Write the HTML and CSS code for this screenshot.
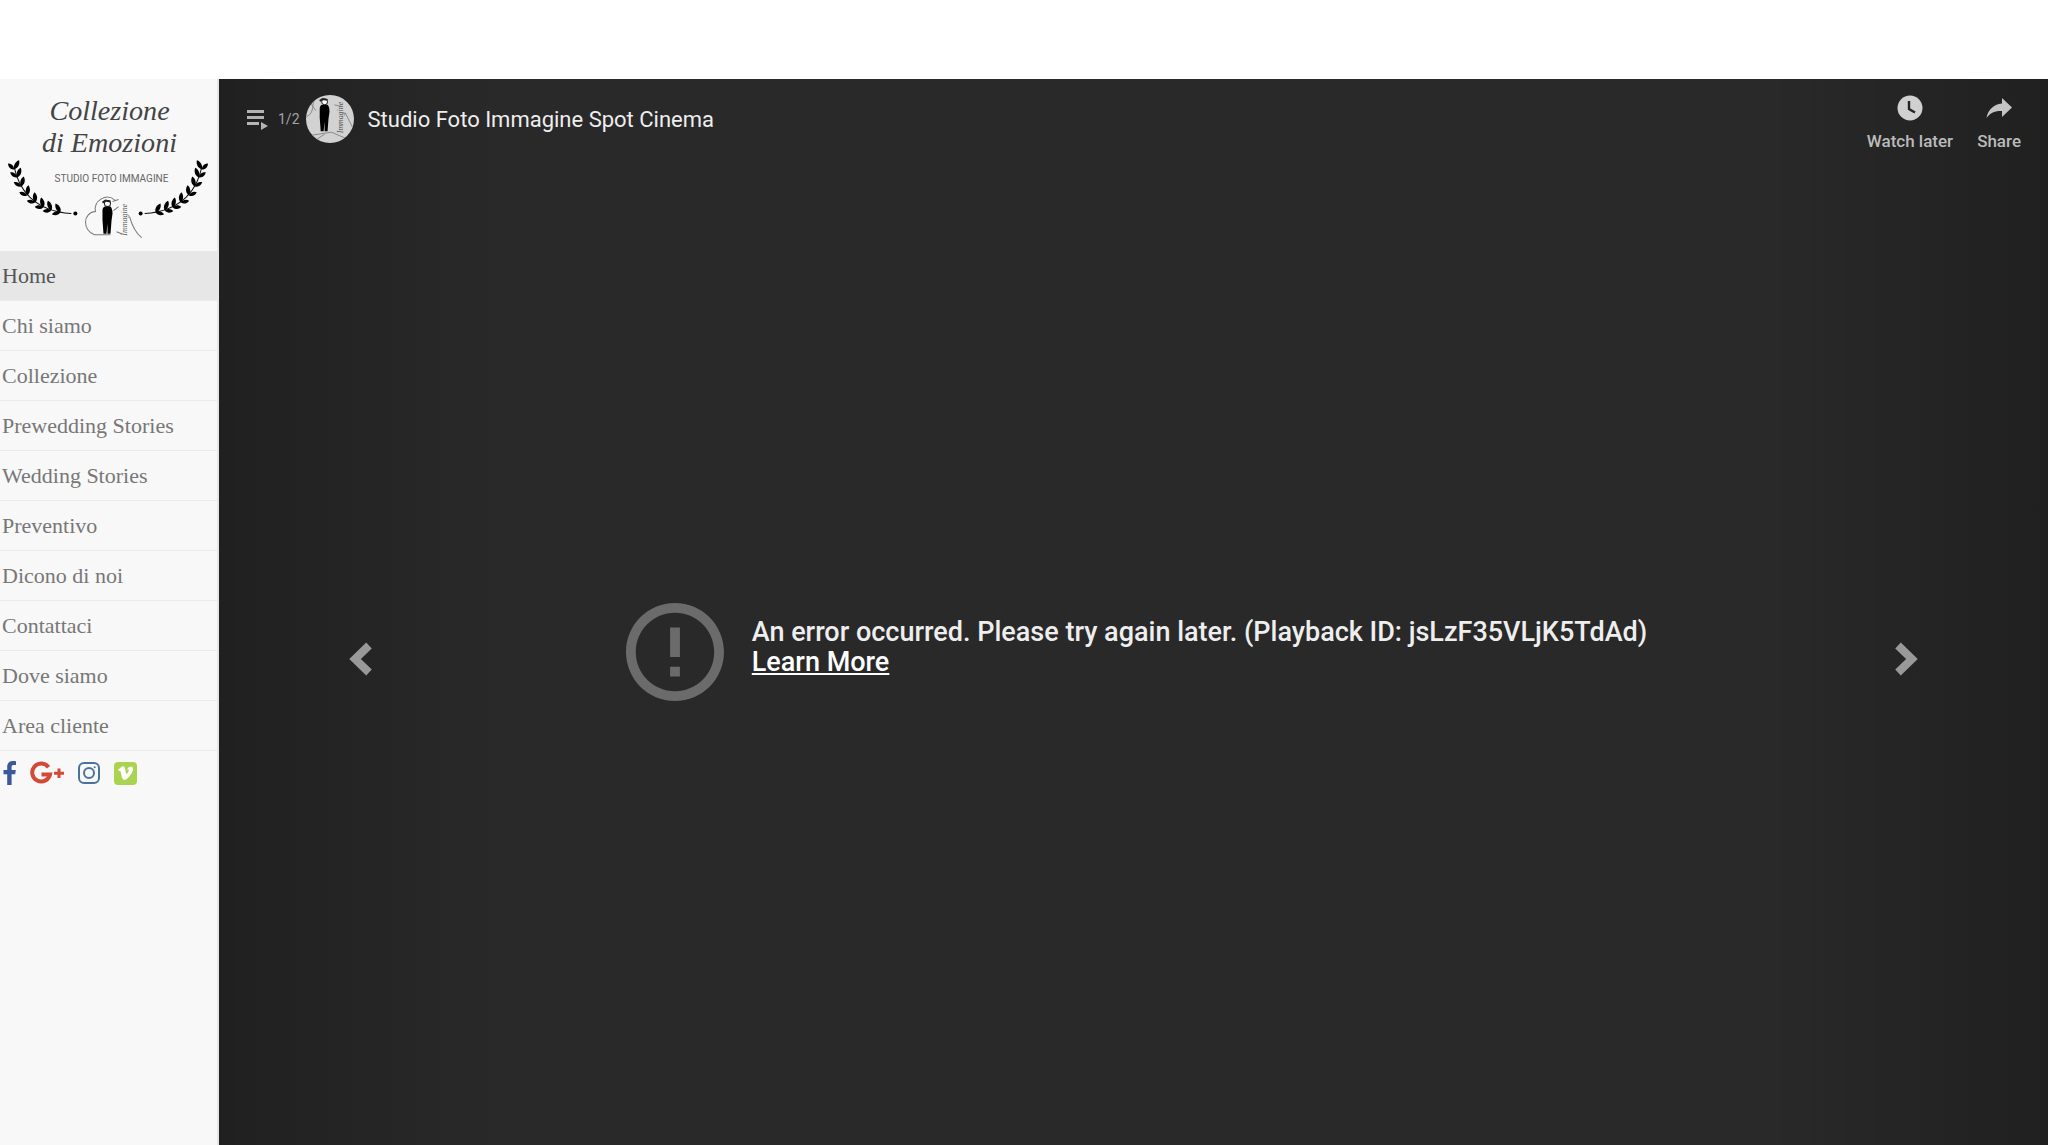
FILE: index.html
```html
<!DOCTYPE html>
<html lang="it">
<head>
    <meta charset="UTF-8">
    <meta name="viewport" content="width=device-width, initial-scale=1.0">
    <title>Studio Foto Immagine</title>
    <link rel="stylesheet" href="styles.css">
</head>
<body>
    <div class="page">
        <aside class="sidebar">
            <a class="brand" href="#">
                <svg class="logo" viewBox="0 0 216 171" role="img" aria-label="Collezione di Emozioni">
                    <defs>
                        <g id="leaf">
                            <path d="M0 0C-4 0-6-3-6-6C-3-6 0-4 0 0z"/>
                            <path d="M0 0C-1-3 1-8 5-9C6-5 4-1 0 0z"/>
                        </g>
                        <g id="branch">
                            <path d="M14 87C18 108 32 131 71 134" fill="none" stroke="#111" stroke-width="1"/>
                            <use href="#leaf" transform="translate(14 90)"/>
                            <use href="#leaf" transform="translate(17 98) rotate(-8)"/>
                            <use href="#leaf" transform="translate(21 107) rotate(-14)"/>
                            <use href="#leaf" transform="translate(27 116) rotate(-22)"/>
                            <use href="#leaf" transform="translate(35 123) rotate(-32)"/>
                            <use href="#leaf" transform="translate(43 128) rotate(-40)"/>
                            <use href="#leaf" transform="translate(51 131) rotate(-48)"/>
                            <use href="#leaf" transform="translate(60 133) rotate(-56)"/>
                            <circle cx="75" cy="134" r="2"/>
                        </g>
                        <g id="couple">
                            <circle cx="107" cy="124" r="3" fill="#f8f8f8" stroke="#222" stroke-width="1"/>
                            <path d="M105 127h5c1 1 2 3 2 7l-1 7l-1 13h-3v-10l-1 10h-3l-1-14v-9c0-2 1-4 3-4z"/>
                            <path d="M102 123l3-2l5 1" fill="none" stroke="#222" stroke-width="2"/>
                        </g>
                    </defs>
                    <text class="logo-script" x="109" y="41">Collezione</text>
                    <text class="logo-script" x="109" y="73">di Emozioni</text>
                    <text class="logo-caps" x="111" y="103">STUDIO FOTO IMMAGINE</text>
                    <use href="#branch"/>
                    <use href="#branch" transform="translate(215 0) scale(-1 1)"/>
                    <path d="M110 155H94C82 151 82 133 95 132C93 121 106 113 115 121" fill="none" stroke="#777" stroke-width="1"/>
                    <path d="M112 122l6-2M113 131l5-4M116 152l5 2M129 137c3 11 7 17 12 21" fill="none" stroke="#777" stroke-width="1"/>
                    <use href="#couple"/>
                    <text class="logo-name" transform="translate(126 156) rotate(-90)">Immagine</text>
                </svg>
            </a>
            <nav class="menu">
                <a class="active" href="#">Home</a>
                <a href="#">Chi siamo</a>
                <a href="#">Collezione</a>
                <a href="#">Prewedding Stories</a>
                <a href="#">Wedding Stories</a>
                <a href="#">Preventivo</a>
                <a href="#">Dicono di noi</a>
                <a href="#">Contattaci</a>
                <a href="#">Dove siamo</a>
                <a href="#">Area cliente</a>
            </nav>
            <div class="social">
                <a href="#" aria-label="Facebook">
                    <svg width="14" height="24" viewBox="0 0 14 24"><path fill="#3b5998" d="M13 .3v3.800h-2.300C9 4.100 8.600 5 8.600 6.200V9h4.200l-.6 4.200H8.600V24H4.200V13.200H.5V9h3.700V5.800C4.200 2.200 6.400.1 9.700.1c1.500 0 2.800.1 3.300.2z"/></svg>
                </a>
                <a href="#" aria-label="Google Plus">
                    <svg width="34" height="24" viewBox="0 0 34 24"><path fill="none" stroke="#d34836" stroke-width="4" d="M18.500 6.200A9 9 0 1 0 20 13.500H11.500"/><path fill="#d34836" d="M27.500 7.500h3v3.200H34v3h-3.500V17h-3v-3.300H24v-3h3.500z"/></svg>
                </a>
                <a href="#" aria-label="Instagram">
                    <svg width="24" height="24" viewBox="0 0 24 24" fill="none" stroke="#4c729b" stroke-width="2"><rect x="2" y="2" width="20" height="20" rx="5"/><circle cx="12" cy="12" r="5"/><circle cx="17.700" cy="6.300" r="1" fill="#4c729b" stroke="none"/></svg>
                </a>
                <a href="#" aria-label="Vimeo">
                    <svg width="24" height="24" viewBox="0 0 24 24"><rect x="0" y="1" width="23" height="23" rx="4" fill="#aad450"/><path fill="#fff" d="M4 8.800L8 5.500c2-.9 2.900.6 3.300 2.900c.4 2.700.9 4.500 1.500 4.500s2.300-2.900 2-3.800c-.3-.8-1.100-.6-1.800-.3c1-3.300 5.700-5 6-.9c.2 3.500-5.600 10.900-8.400 10.900c-2.500 0-2.800-3.500-3.700-6.900c-.5-2.200-.9-2.700-2-1.900z"/></svg>
                </a>
            </div>
        </aside>

        <main class="player">
            <header class="player-bar">
                <button class="playlist" type="button">
                    <svg width="24" height="24" viewBox="0 0 24 24" fill="#b4b4b4"><path d="M1 3h17v3H1zM1 9h17v3H1zM1 15h12v3H1zM15 15v8l7-4z"/></svg>
                    <span>1/2</span>
                </button>
                <svg class="avatar" viewBox="84 114 49 49" aria-hidden="true">
                    <rect x="84" y="114" width="49" height="49" fill="#d2d2d2"/>
                    <path d="M85 136c9-5 3-12 10-21M88 121l6 9M90 155l20-3l14 6M94 160l9-6M124 132l8 16M113 124l8 2" fill="none" stroke="#888" stroke-width="1"/>
                    <use href="#couple" transform="translate(-4 -3)"/>
                    <text class="logo-name" transform="translate(122 153) rotate(-90)">Immagine</text>
                </svg>
                <a class="video-title" href="#">Studio Foto Immagine Spot Cinema</a>
                <button class="action" type="button">
                    <svg width="26" height="26" viewBox="0 0 26 26"><circle cx="13" cy="13" r="12.500" fill="#d0d0d0"/><path d="M12 6v8l6 3.500" fill="none" stroke="#252525" stroke-width="2.400"/></svg>
                    <span>Watch later</span>
                </button>
                <button class="action" type="button">
                    <svg width="26" height="26" viewBox="0 0 26 26"><path fill="#c4c4c4" d="M16 3l10 9.500L16 22v-6C9 15.500 4 18 0.500 23C2 15 7 9.500 16 8.500z"/></svg>
                    <span>Share</span>
                </button>
            </header>

            <div class="error">
                <svg class="error-icon" viewBox="2 2 20 20" fill="#6b6b6b"><path d="M11 15h2v2h-2zm0-8h2v6h-2zm.99-5C6.470 2 2 6.480 2 12s4.470 10 9.990 10C17.520 22 22 17.520 22 12S17.520 2 11.990 2zM12 20c-4.420 0-8-3.580-8-8s3.580-8 8-8 8 3.580 8 8-3.580 8-8 8z"/></svg>
                <p>An error occurred. Please try again later. (Playback ID: jsLzF35VLjK5TdAd)<br>
                <a href="#">Learn More</a></p>
            </div>

            <button class="arrow prev" type="button" aria-label="Previous">
                <svg width="24" height="34" viewBox="0 0 24 34"><path d="M20 3.500L6 17l14 13.500" fill="none" stroke="#999" stroke-width="8"/></svg>
            </button>
            <button class="arrow next" type="button" aria-label="Next">
                <svg width="24" height="34" viewBox="0 0 24 34"><path d="M4 3.500L18 17L4 30.500" fill="none" stroke="#999" stroke-width="8"/></svg>
            </button>
        </main>
    </div>
</body>
</html>
```
FILE: styles.css
```css
* {
    box-sizing: border-box;
}
body {
    margin: 0;
    padding-top: 79px;
    background: #fff;
    font-family: Roboto, sans-serif;
}
a {
    color: inherit;
    text-decoration: none;
}
button {
    padding: 0;
    border: none;
    background: none;
    font-family: inherit;
    cursor: pointer;
}
svg {
    display: block;
}
.page {
    display: flex;
    min-height: calc(100vh - 79px);
}

/* sidebar */
.sidebar {
    flex: none;
    width: 219px;
    background: #f8f8f8;
    border-right: 2px solid #e7e7e7;
}
.logo {
    width: 100%;
}
.logo-script {
    font: italic 28px "Liberation Serif", serif;
    fill: #444;
    text-anchor: middle;
}
.logo-caps {
    font: 10px Roboto, sans-serif;
    fill: #666;
    text-anchor: middle;
}
.logo-name {
    font: italic 8px "Liberation Serif", serif;
    fill: #555;
}
.menu a {
    display: block;
    height: 50px;
    padding-left: 2px;
    border-bottom: 1px solid #ebebeb;
    font: 22px/50px "Liberation Serif", serif;
    color: #777;
}
.menu a.active {
    background: #e7e7e7;
    color: #555;
}
.social {
    display: flex;
    gap: 13px;
    padding: 10px 3px;
}

/* video player */
.player {
    position: relative;
    flex: 1;
    display: flex;
    flex-direction: column;
    background: #292929;
    color: #eee;
}
.player-bar {
    position: relative;
    z-index: 1;
    display: flex;
    align-items: center;
    height: 80px;
    padding: 0 27px;
}
.playlist {
    display: flex;
    align-items: center;
    gap: 8px;
    font-size: 14px;
    color: #a4a4a4;
}
.avatar {
    width: 48px;
    height: 48px;
    margin: 0 14px 0 6px;
    border-radius: 50%;
}
.video-title {
    margin-right: auto;
    font-size: 22px;
}
.action {
    display: flex;
    flex-direction: column;
    align-items: center;
    gap: 10px;
    margin-left: 24px;
    padding-top: 8px;
    font-size: 17px;
    font-weight: 500;
    color: #bbb;
}
.error {
    flex: 1;
    display: flex;
    align-items: center;
    justify-content: center;
    gap: 28px;
    padding-left: 6px;
}
.error-icon {
    width: 98px;
    height: 98px;
}
.error p {
    margin: 0;
    padding-bottom: 10px;
    font-size: 27px;
    font-weight: 500;
    line-height: 30px;
}
.error a {
    color: #fff;
    text-decoration: underline;
}

/* slide controls lie over both edges of the video */
.arrow {
    position: absolute;
    top: 0;
    bottom: 0;
    width: 15.5%;
    display: flex;
    align-items: center;
    justify-content: center;
    padding-top: 94px;
}
.prev {
    left: 0;
    background: linear-gradient(to right, rgba(0, 0, 0, 0.22), rgba(0, 0, 0, 0));
}
.next {
    right: 0;
    background: linear-gradient(to left, rgba(0, 0, 0, 0.22), rgba(0, 0, 0, 0));
}
```
